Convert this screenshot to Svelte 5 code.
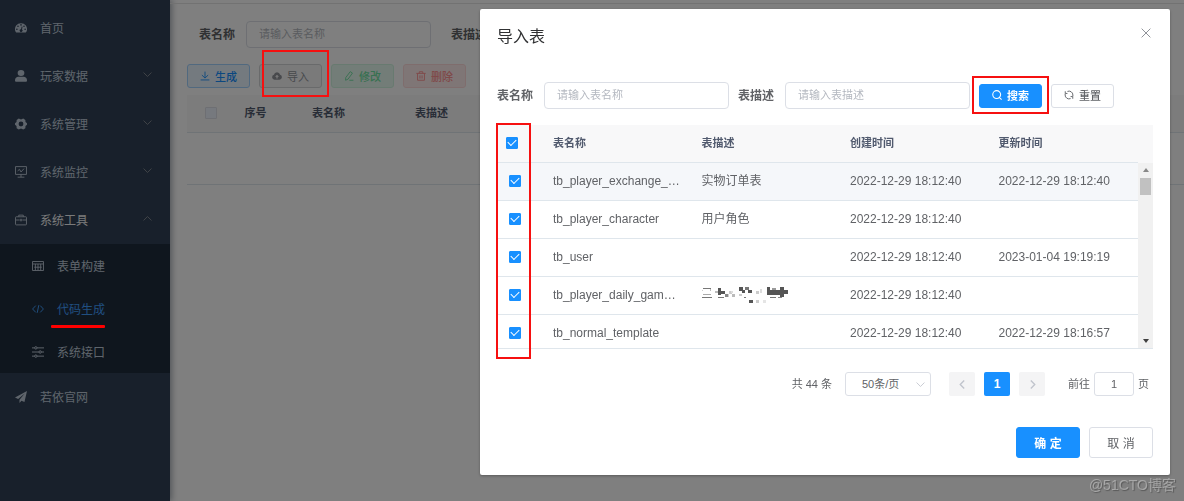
<script>
  let rows = $state([
    { name: 'tb_player_exchange_order', comment: '实物订单表', created: '2022-12-29 18:12:40', updated: '2022-12-29 18:12:40', checked: true },
    { name: 'tb_player_character', comment: '用户角色', created: '2022-12-29 18:12:40', updated: '', checked: true },
    { name: 'tb_user', comment: '', created: '2022-12-29 18:12:40', updated: '2023-01-04 19:19:19', checked: true },
    { name: 'tb_player_daily_game_log', comment: '', masked: true, created: '2022-12-29 18:12:40', updated: '', checked: true },
    { name: 'tb_normal_template', comment: '', created: '2022-12-29 18:12:40', updated: '2022-12-29 18:16:57', checked: true }
  ]);

  let allChecked = $derived(rows.every((r) => r.checked));
  let open = $state(true);
  let tableName = $state('');
  let tableComment = $state('');
  let pageNo = $state('1');

  const menus = [
    { icon: 'dashboard', label: '首页' },
    { icon: 'user', label: '玩家数据', arrow: 'down' },
    { icon: 'gear', label: '系统管理', arrow: 'down' },
    { icon: 'monitor', label: '系统监控', arrow: 'down' },
    {
      icon: 'tool',
      label: '系统工具',
      arrow: 'up',
      children: [
        { icon: 'table', label: '表单构建' },
        { icon: 'code', label: '代码生成', active: true },
        { icon: 'sliders', label: '系统接口' }
      ]
    },
    { icon: 'plane', label: '若依官网' }
  ];

  // pixelated cell: x, y, w, h, shade
  const mosaic = [
    [1, 2, 8, 1, '#777'], [0, 4, 1, 1, '#ccc'], [8, 3, 1, 2, '#bbb'], [1, 8, 8, 1, '#aaa'], [0, 11, 10, 1, '#777'],
    [13, 5, 3, 2, '#bbb'], [16, 2, 3, 7, '#555'], [19, 5, 4, 3, '#555'], [23, 8, 3, 3, '#888'], [16, 11, 6, 1, '#777'],
    [26, 8, 1, 3, '#ccc'], [27, 5, 3, 3, '#ccc'], [30, 8, 3, 3, '#bbb'], [29, 5, 2, 2, '#ddd'],
    [37, 1, 4, 4, '#555'], [40, 4, 3, 3, '#555'], [43, 1, 4, 3, '#777'], [46, 4, 4, 3, '#555'], [37, 8, 3, 2, '#ccc'], [42, 11, 2, 1, '#777'],
    [47, 14, 4, 3, '#555'], [54, 5, 3, 3, '#ccc'], [54, 14, 3, 3, '#ccc'], [58, 3, 2, 4, '#ddd'], [61, 14, 3, 3, '#e5e5e5'],
    [65, 1, 3, 8, '#555'], [68, 4, 12, 5, '#555'], [70, 2, 4, 2, '#999'], [78, 1, 4, 10, '#555'], [82, 4, 4, 4, '#555'], [68, 11, 6, 1, '#777'], [76, 11, 4, 1, '#888']
  ];

  function toggleAll(e) {
    const value = e.target.checked;
    rows.forEach((r) => (r.checked = value));
  }

  function reset() {
    tableName = '';
    tableComment = '';
  }
</script>

{#snippet icon(name)}
  <svg class="icon" viewBox="0 0 16 16" aria-hidden="true">
    {#if name === 'dashboard'}
      <path fill="currentColor" fill-rule="evenodd" d="M8 1.500a8 8 0 0 0-7.600 10.500c.3 1.200.8 2 2 2h11.200c1.200 0 1.700-.8 2-2A8 8 0 0 0 8 1.500zM8 2.800A1.100 1.100 0 1 1 8 5a1.100 1.100 0 0 1 0-2.200zM4 4.500a1.100 1.100 0 1 1 0 2.200 1.100 1.100 0 0 1 0-2.200zM2.500 8.500a1.100 1.100 0 1 1 0 2.200 1.100 1.100 0 0 1 0-2.200zM13.500 8.500a1.100 1.100 0 1 1 0 2.200 1.100 1.100 0 0 1 0-2.200zM12 4.500a1.100 1.100 0 1 1 0 2.200 1.100 1.100 0 0 1 0-2.200zM8.900 6l1.200.3-.8 3.600A1.900 1.900 0 1 1 8 9.500z" />
    {:else if name === 'user'}
      <ellipse fill="currentColor" cx="8" cy="4" rx="4.500" ry="4" />
      <path fill="currentColor" d="M4.500 9h7C14 9 16 11 16 13.500c0 1.500-.6 2-2 2H2c-1.400 0-2-.5-2-2C0 11 2 9 4.500 9z" />
    {:else if name === 'gear'}
      <path fill="currentColor" fill-rule="evenodd" d="M5 .8 8 1.900l3-1.100 2.800 1.700.2 2.900L16 7v2l-2 1.600-.2 2.900L11 15.200l-3-1.100-3 1.100-2.800-1.700-.2-2.900L0 9V7l2-1.600.2-2.900zM8 4.800a3.200 3.200 0 1 0 0 6.400 3.200 3.200 0 0 0 0-6.400z" />
    {:else if name === 'monitor'}
      <g fill="none" stroke="currentColor" stroke-width="1.200"><path d="M.7.8h14.600v10.400H.7zM8 11.200v3.600M3.500 14.900h9" /><path d="m3.500 6.500 2.500-2 2 3.500 4-4.500" /></g>
    {:else if name === 'tool'}
      <g fill="none" stroke="currentColor" stroke-width="1.200"><rect x=".7" y="3.700" width="14.600" height="10.800" rx="1" /><path d="M5 3.700V1.500h6v2.200M.7 8h5.500M9.800 8h5.500M6.500 8h3M8 6.300v3.600" /></g>
    {:else if name === 'table'}
      <path fill="none" stroke="currentColor" stroke-width="1.200" d="M.7 2h14.600v12H.7zM.7 5.300h14.600M3 9.600h10M4.500 5.300V14M8 5.300V14M11.600 5.300V14" />
    {:else if name === 'code'}
      <path fill="none" stroke="currentColor" stroke-width="1.300" d="M5 3.500.8 8 5 12.500M11 3.500 15.200 8 11 12.500M9 3 7 13" />
    {:else if name === 'sliders'}
      <g fill="none" stroke="currentColor" stroke-width="1.300"><path d="M0 2.500h3.500M6.700 2.500H16M0 8h9.300M12.500 8H16M0 13.500h3.500M6.700 13.500H16" /><circle cx="5.100" cy="2.500" r="1.600" /><circle cx="10.900" cy="8" r="1.600" /><circle cx="5.100" cy="13.500" r="1.600" /></g>
    {:else if name === 'plane'}
      <path fill="currentColor" d="M16 0 0 8.600l4.200 2L13 3.400 6 11.700V16l2.600-3 4 1.700z" />
    {:else if name === 'down'}
      <path fill="none" stroke="currentColor" stroke-width="1.500" d="m1 4.500 7 7 7-7" />
    {:else if name === 'up'}
      <path fill="none" stroke="currentColor" stroke-width="1.500" d="m1 11.500 7-7 7 7" />
    {:else if name === 'left'}
      <path fill="none" stroke="currentColor" stroke-width="2.400" d="M11 1 4 8l7 7" />
    {:else if name === 'right'}
      <path fill="none" stroke="currentColor" stroke-width="2.400" d="m5 1 7 7-7 7" />
    {:else if name === 'download'}
      <path fill="none" stroke="currentColor" stroke-width="1.400" d="M8 1v10M3 6.500 8 11.300l5-4.800M1 14.300h14" />
    {:else if name === 'upload'}
      <path fill="currentColor" fill-rule="evenodd" d="M8 2a5 5 0 0 1 4.900 4A4.100 4.100 0 0 1 12 14H4a4.100 4.100 0 0 1-.9-8A5 5 0 0 1 8 2zm0 3.800L4.800 9.300h2.200V12h2V9.300h2.200z" />
    {:else if name === 'edit'}
      <path fill="none" stroke="currentColor" stroke-width="1.500" d="M10 1l3.500 2.300-7 9.700-4 1.800.3-4.300zM8.500 14.800H15" />
    {:else if name === 'trash'}
      <path fill="none" stroke="currentColor" stroke-width="1.500" d="M.5 3.800h15M5.200 3.800V1.200h5.600v2.600M2.500 3.800v11h11v-11M6.300 7v5M9.700 7v5" />
    {:else if name === 'search'}
      <path fill="none" stroke="currentColor" stroke-width="1.700" d="M7.500 1a6.300 6.300 0 1 1 0 12.600A6.300 6.300 0 0 1 7.500 1zM11.800 11.800l3.500 3.500" />
    {:else if name === 'refresh'}
      <path fill="none" stroke="currentColor" stroke-width="1.500" d="M5.500 2.300A6.200 6.200 0 0 1 14.200 8v2M10.500 13.700A6.200 6.200 0 0 1 1.800 8V6M5.500 5.500H2V2M10.500 10.500H14V14" />
    {:else if name === 'close'}
      <path fill="none" stroke="currentColor" stroke-width="1.600" d="m1 1 14 14M15 1 1 15" />
    {/if}
  </svg>
{/snippet}

<div class="app">
  <nav class="sidebar">
    {#each menus as menu}
      <a class="menu" class:opened={menu.children} href="#{menu.label}">
        {@render icon(menu.icon)}
        <span class="menu-label">{menu.label}</span>
        {#if menu.arrow}
          <i class="arrow">{@render icon(menu.arrow)}</i>
        {/if}
      </a>
      {#if menu.children}
        <div class="submenu">
          {#each menu.children as sub}
            <a class="menu sub" class:active={sub.active} href="#{sub.label}">
              {@render icon(sub.icon)}
              <span class="menu-label">{sub.label}{#if sub.active}<i class="underline"></i>{/if}</span>
            </a>
          {/each}
        </div>
      {/if}
    {/each}
  </nav>

  <main>
    <div class="topbar"></div>
    <section class="content">
      <form class="query page-query">
        <label for="page-name">表名称</label>
        <input id="page-name" type="text" placeholder="请输入表名称" />
        <label class="next" for="page-comment">表描述</label>
        <input id="page-comment" type="text" placeholder="请输入表描述" />
      </form>

      <div class="toolbar">
        <button class="btn small gen">{@render icon('download')}生成</button>
        <div class="marked">
          <button class="btn small import" onclick={() => (open = true)}>{@render icon('upload')}导入</button>
          <i class="mark mark-import"></i>
        </div>
        <button class="btn small edit" disabled>{@render icon('edit')}修改</button>
        <button class="btn small del" disabled>{@render icon('trash')}删除</button>
      </div>

      <table class="page-table">
        <thead>
          <tr>
            <th class="p-check"><input type="checkbox" aria-label="全选" disabled /></th>
            <th class="p-index">序号</th>
            <th class="p-name">表名称</th>
            <th class="p-name">表描述</th>
            <th></th>
          </tr>
        </thead>
        <tbody>
          <tr><td colspan="5"></td></tr>
        </tbody>
      </table>
    </section>
  </main>

  {#if open}
    <div class="overlay">
      <div class="dialog" role="dialog" aria-labelledby="dialog-title">
        <header>
          <h2 id="dialog-title">导入表</h2>
          <button class="close" aria-label="关闭" onclick={() => (open = false)}>{@render icon('close')}</button>
        </header>

        <div class="body">
          <form class="query" onsubmit={(e) => e.preventDefault()}>
            <label for="name">表名称</label>
            <input id="name" type="text" placeholder="请输入表名称" bind:value={tableName} />
            <label class="second" for="comment">表描述</label>
            <input id="comment" type="text" placeholder="请输入表描述" bind:value={tableComment} />
            <div class="marked">
              <button class="btn small primary" type="submit">{@render icon('search')}搜索</button>
              <i class="mark mark-search"></i>
            </div>
            <button class="btn small" type="button" onclick={reset}>{@render icon('refresh')}重置</button>
          </form>

          <div class="grid">
            <table>
              <thead>
                <tr>
                  <th class="check"><input type="checkbox" aria-label="全选" checked={allChecked} onchange={toggleAll} /></th>
                  <th>表名称</th>
                  <th>表描述</th>
                  <th>创建时间</th>
                  <th>更新时间</th>
                  <th class="gutter"></th>
                </tr>
              </thead>
            </table>
            <div class="scroll">
              <div class="viewport">
                <table>
                  <tbody>
                    {#each rows as row, i}
                      <tr class:hover={i === 0}>
                        <td class="check"><input type="checkbox" aria-label={row.name} bind:checked={row.checked} /></td>
                        <td>{row.name}</td>
                        <td>
                          {#if row.masked}
                            <svg class="mosaic" viewBox="0 0 88 18" aria-hidden="true">
                              {#each mosaic as [x, y, w, h, fill]}
                                <rect {x} {y} width={w} height={h} {fill} />
                              {/each}
                            </svg>
                          {:else}
                            {row.comment}
                          {/if}
                        </td>
                        <td>{row.created}</td>
                        <td>{row.updated}</td>
                      </tr>
                    {/each}
                  </tbody>
                </table>
              </div>
              <div class="scrollbar">
                <i class="tri up"></i>
                <i class="thumb"></i>
                <i class="tri down"></i>
              </div>
            </div>
            <i class="mark mark-checks"></i>
          </div>

          <div class="pagination">
            <span>共 44 条</span>
            <div class="select">
              <select aria-label="每页条数">
                <option>50条/页</option>
                <option>100条/页</option>
              </select>
              {@render icon('down')}
            </div>
            <div class="pager">
              <button aria-label="上一页" disabled>{@render icon('left')}</button>
              <button class="current">1</button>
              <button aria-label="下一页" disabled>{@render icon('right')}</button>
            </div>
            <label class="jump">前往<input type="text" bind:value={pageNo} />页</label>
          </div>
        </div>

        <footer>
          <button class="btn primary">确 定</button>
          <button class="btn" onclick={() => (open = false)}>取 消</button>
        </footer>
      </div>
    </div>
  {/if}

  <span class="watermark">@51CTO博客</span>
</div>

<style>
  :global(body) {
    background: #fff;
  }

  .app {
    display: flex;
    min-height: 100vh;
    overflow: hidden;
    font-family: "Liberation Sans", "Noto Sans CJK SC", sans-serif;
    font-size: 12px;
    line-height: 20px;
    color: #606266;
  }

  .app * {
    box-sizing: border-box;
  }

  input,
  select,
  button {
    font-family: inherit;
    color: inherit;
  }

  .icon {
    width: 12px;
    height: 12px;
    flex: none;
    display: block;
  }

  /* sidebar */
  .sidebar {
    flex: none;
    width: 170px;
    padding-top: 4px;
    background: #304156;
    box-shadow: 2px 0 6px rgba(0, 21, 41, 0.35);
  }

  .menu {
    display: flex;
    align-items: center;
    gap: 13px;
    height: 48px;
    padding: 0 18px 0 15px;
    color: #bfcbd9;
    text-decoration: none;
  }

  .menu.opened {
    color: #f4f4f5;
  }

  .menu > :global(.icon) {
    color: #bfcbd9;
  }

  .menu-label {
    position: relative;
    padding-top: 2px;
  }

  .arrow {
    margin-left: auto;
    padding-bottom: 3px;
    color: #909399;
  }

  .arrow :global(.icon) {
    width: 9px;
    height: 9px;
  }

  .submenu {
    background: #1f2d3d;
  }

  .menu.sub {
    height: 43px;
    padding-left: 32px;
  }

  .menu.sub.active,
  .menu.sub.active > :global(.icon) {
    color: #409eff;
  }

  .underline {
    position: absolute;
    z-index: 20;
    left: -6px;
    right: 0;
    bottom: -8px;
    height: 3px;
    border-radius: 1px;
    background: #f00;
  }

  /* page */
  main {
    flex: 1;
    min-width: 0;
  }

  .topbar {
    height: 4px;
    border-bottom: 1px solid #e4e4e4;
  }

  .content {
    padding: 17px 0 0 17px;
  }

  .query {
    display: flex;
    align-items: center;
    margin: 0 0 16px;
  }

  .query label {
    flex: none;
    margin-right: 11px;
    font-weight: 700;
    white-space: nowrap;
  }

  .query label.second {
    margin-left: 9px;
  }

  .query input {
    width: 185px;
    height: 27px;
    padding: 0 12px 1px;
    border: 1px solid #dcdfe6;
    border-radius: 4px;
    background: #fff;
    font-size: 11px;
    outline: none;
  }

  .query input::placeholder {
    color: #b4b8c0;
  }

  .query .btn {
    margin-left: 9px;
  }

  .page-query {
    padding-left: 12px;
  }

  .page-query label.next {
    margin-left: 20px;
  }

  .toolbar {
    display: flex;
    gap: 9px;
    margin-bottom: 7px;
  }

  .btn {
    display: flex;
    align-items: center;
    justify-content: center;
    gap: 5px;
    width: 64px;
    height: 31px;
    padding: 0 0 1px;
    border: 1px solid #dcdfe6;
    border-radius: 3px;
    background: #fff;
    color: #606266;
    font-size: 12px;
    font-weight: 400;
    cursor: pointer;
    white-space: nowrap;
  }

  .btn.small {
    width: 63px;
    height: 24px;
    font-size: 11px;
    font-weight: 500;
  }

  .btn.small :global(.icon) {
    width: 10px;
    height: 10px;
  }

  .btn.primary {
    border-color: #1890ff;
    background: #1890ff;
    color: #fff;
    font-weight: 700;
  }

  .btn.gen {
    border-color: #a3d3ff;
    background: #e8f4ff;
    color: #1890ff;
  }

  .btn.import {
    border-color: #d3d4d6;
    background: #f4f4f5;
    color: #909399;
    font-weight: 400;
  }

  .btn.edit {
    border-color: #d0f5e0;
    background: #e7faf0;
    color: #71e2a3;
  }

  .btn.del {
    border-color: #ffdbdb;
    background: #ffeded;
    color: #ff9292;
  }

  .marked {
    position: relative;
  }

  .mark {
    position: absolute;
    z-index: 20;
    border: 2px solid #f61010;
    pointer-events: none;
  }

  .mark-import {
    inset: -14px -7px -9px 3px;
  }

  .mark-search {
    inset: -8px -7px -6px 2px;
  }

  .mark-checks {
    top: -2px;
    bottom: -10px;
    left: -1px;
    width: 35px;
  }

  /* tables */
  table {
    width: 100%;
    table-layout: fixed;
    border-collapse: separate;
    border-spacing: 0;
  }

  th,
  td {
    height: 38px;
    padding: 0 11px 2px 9px;
    border-bottom: 1px solid #dfe6ec;
    text-align: left;
    overflow: hidden;
    text-overflow: ellipsis;
    white-space: nowrap;
  }

  th {
    background: #f8f8f9;
    color: #515a6e;
    font-size: 11px;
    font-weight: 700;
  }

  .page-table th {
    padding: 0 0 2px;
    text-align: center;
  }

  .page-table td {
    height: 52px;
  }

  .p-check {
    width: 47px;
  }

  .p-index {
    width: 43px;
  }

  .p-name {
    width: 103px;
  }

  input[type='checkbox'] {
    appearance: none;
    display: block;
    width: 12px;
    height: 12px;
    margin: 0;
    border: 1px solid #dcdfe6;
    border-radius: 1px;
    background: #fff;
  }

  input[type='checkbox']:disabled {
    margin: 0 auto;
    background: #edf2fc;
  }

  input[type='checkbox']:checked {
    display: flex;
    align-items: center;
    justify-content: center;
    border-color: #1890ff;
    background: #1890ff;
  }

  input[type='checkbox']:checked::after {
    content: '';
    width: 7px;
    height: 4px;
    margin-bottom: 2px;
    border: solid #fff;
    border-width: 0 0 1px 1px;
    transform: rotate(-45deg);
  }

  .check {
    width: 47px;
  }

  td.check {
    padding-left: 12px;
  }

  .gutter {
    width: 15px;
    padding: 0;
    border-bottom-color: #f8f8f9;
  }

  tr.hover td {
    background: #f5f7fa;
  }

  .grid {
    position: relative;
  }

  .scroll {
    display: flex;
    height: 186px;
    border-bottom: 1px solid #dfe6ec;
  }

  .viewport {
    flex: 1;
    min-width: 0;
    overflow: hidden;
  }

  .scrollbar {
    display: flex;
    flex-direction: column;
    align-items: center;
    width: 15px;
    padding: 5px 0;
    background: #f1f1f1;
  }

  .tri {
    border: 3px solid transparent;
  }

  .tri.up {
    border-top: 0;
    border-bottom: 4px solid #888;
  }

  .tri.down {
    margin-top: auto;
    border-bottom: 0;
    border-top: 4px solid #404040;
  }

  .thumb {
    width: 11px;
    height: 17px;
    margin-top: 6px;
    background: #c1c1c1;
  }

  .mosaic {
    display: block;
    width: 88px;
    height: 18px;
  }

  /* dialog */
  .overlay {
    position: fixed;
    z-index: 10;
    inset: 0;
    display: flex;
    align-items: flex-start;
    justify-content: flex-end;
    padding: 9px 14px;
    background: rgba(0, 0, 0, 0.5);
  }

  .dialog {
    width: 100%;
    max-width: 690px;
    border-radius: 2px;
    background: #fff;
    box-shadow: 0 1px 3px rgba(0, 0, 0, 0.3);
  }

  header {
    display: flex;
    justify-content: space-between;
    padding: 17px 17px 9px;
  }

  h2 {
    margin: 0;
    padding-top: 1px;
    color: #303133;
    font-size: 16px;
    font-weight: 400;
    line-height: 19px;
  }

  .close {
    height: 14px;
    padding: 2px;
    border: 0;
    background: none;
    color: #909399;
    cursor: pointer;
  }

  .close :global(.icon) {
    width: 10px;
    height: 10px;
  }

  .body {
    padding: 27px 17px 0;
  }

  .pagination {
    display: flex;
    align-items: center;
    justify-content: flex-end;
    margin-top: 23px;
    padding-right: 4px;
    font-size: 11px;
  }

  .select {
    position: relative;
    margin: 0 18px 0 13px;
  }

  .select select {
    display: block;
    appearance: none;
    width: 86px;
    height: 24px;
    padding: 0 16px;
    border: 1px solid #dcdfe6;
    border-radius: 3px;
    background: #fff;
    font-size: 11px;
  }

  .select :global(.icon) {
    position: absolute;
    top: 8px;
    right: 6px;
    width: 9px;
    height: 9px;
    color: #c0c4cc;
    pointer-events: none;
  }

  .pager {
    display: flex;
    gap: 9px;
  }

  .pager button {
    display: flex;
    align-items: center;
    justify-content: center;
    width: 26px;
    height: 24px;
    padding: 0;
    border: 0;
    border-radius: 2px;
    background: #f4f4f5;
    color: #c0c4cc;
    font-size: 12px;
    font-weight: 700;
  }

  .pager button.current {
    background: #1890ff;
    color: #fff;
  }

  .pager :global(.icon) {
    width: 9px;
    height: 9px;
  }

  .jump {
    display: flex;
    align-items: center;
    gap: 4px;
    margin-left: 23px;
  }

  .jump input {
    width: 40px;
    height: 24px;
    padding: 0;
    border: 1px solid #dcdfe6;
    border-radius: 3px;
    font-size: 11px;
    text-align: center;
  }

  footer {
    display: flex;
    justify-content: flex-end;
    gap: 9px;
    padding: 31px 17px 17px;
  }

  .watermark {
    position: fixed;
    z-index: 30;
    right: 8px;
    bottom: 6px;
    color: rgba(255, 255, 255, 0.35);
    font-size: 14px;
    text-shadow: 1px 1px 1px rgba(0, 0, 0, 0.3);
  }
</style>
